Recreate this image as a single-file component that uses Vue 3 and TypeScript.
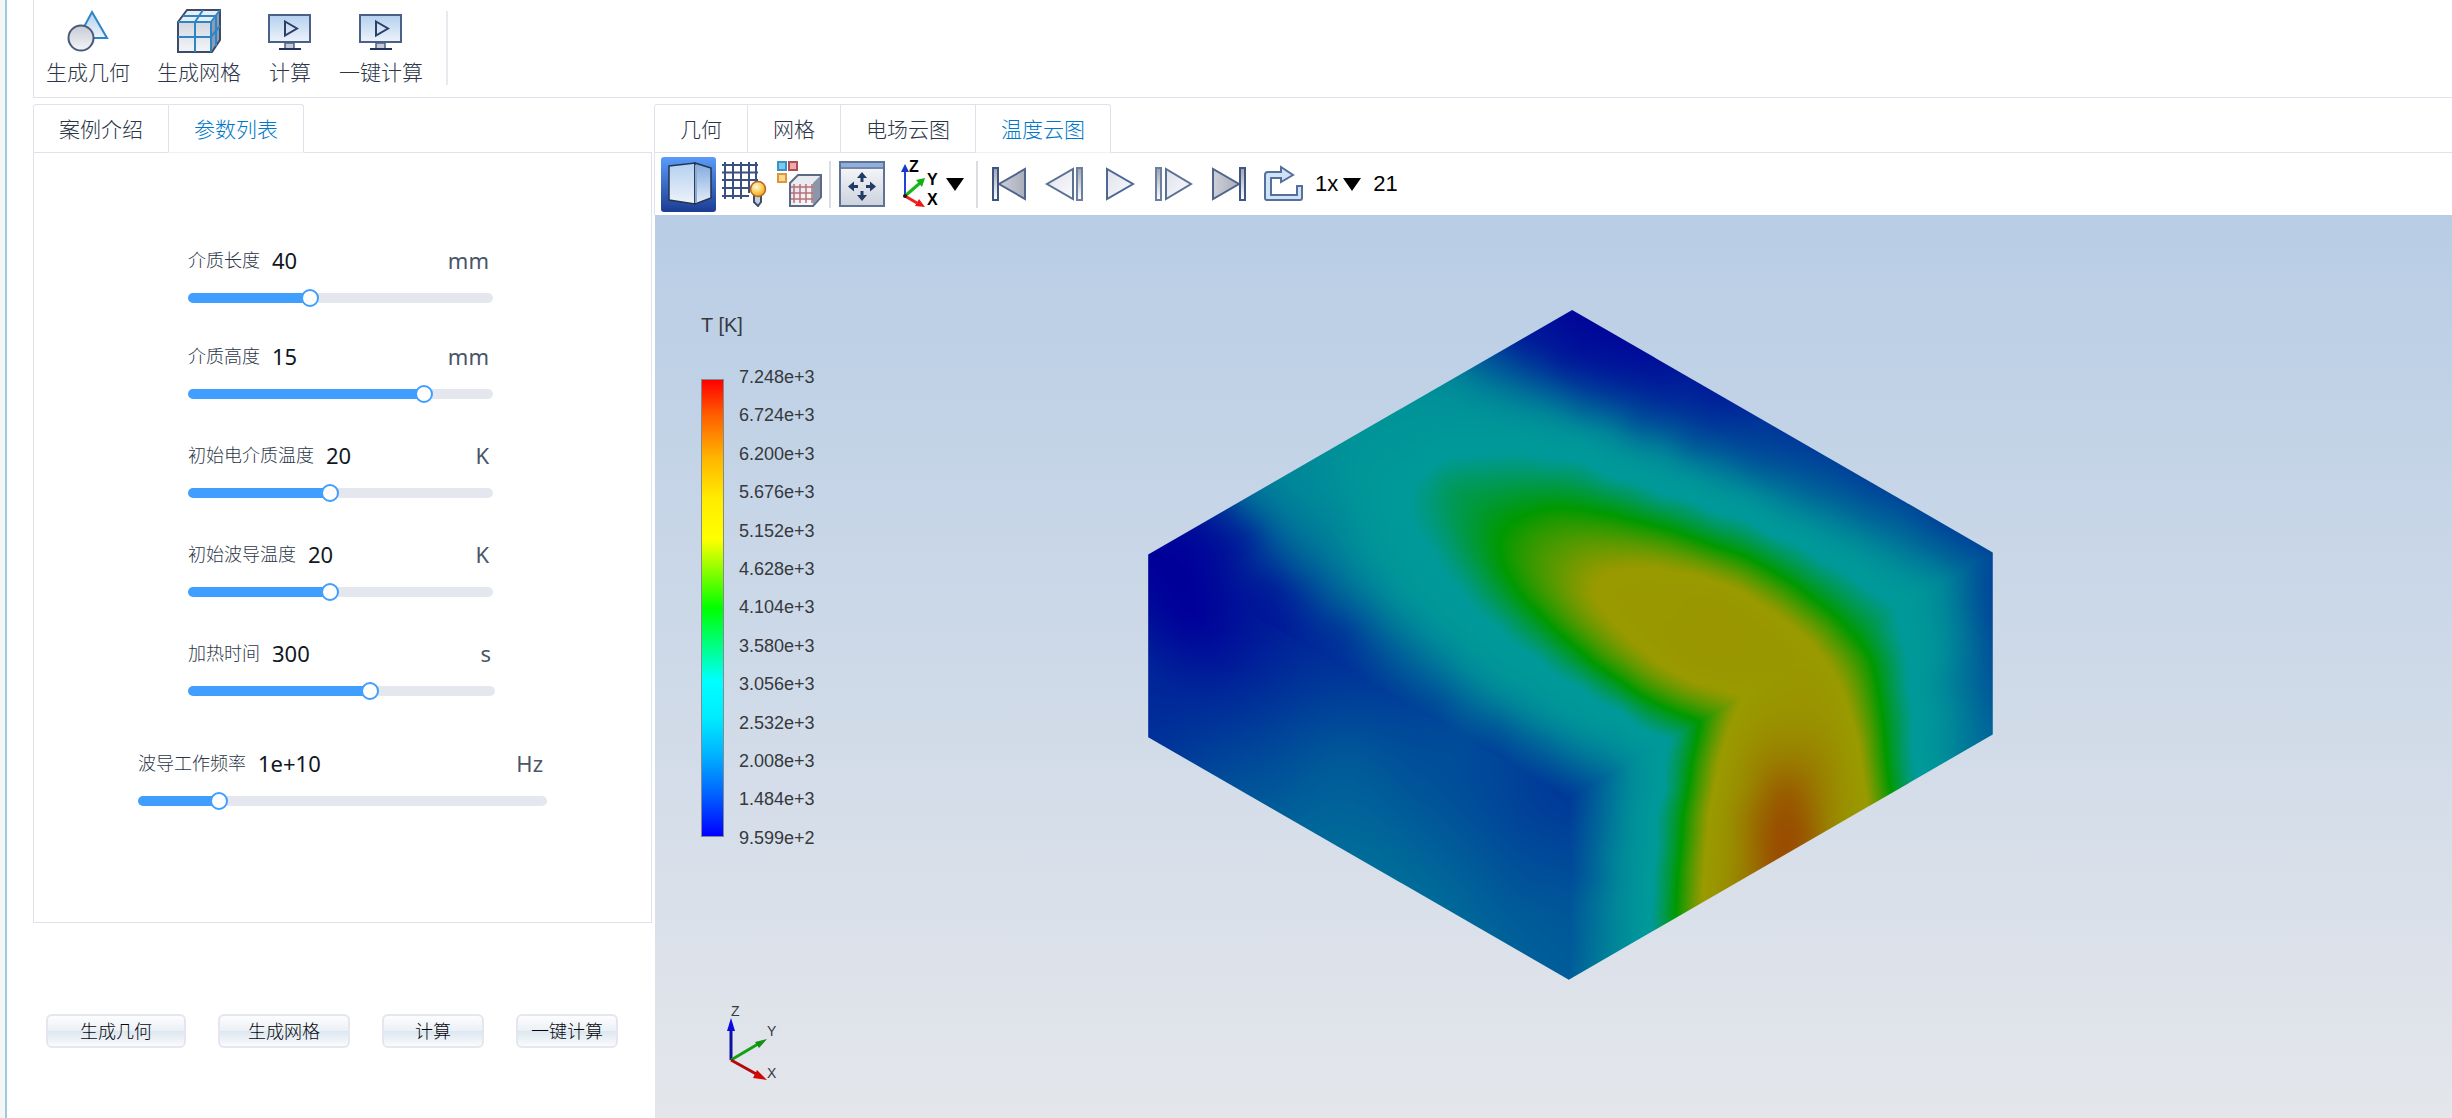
<script setup lang="ts">
import { onMounted, ref } from 'vue'

interface Param {
  id: string
  label: string
  value: number
  text: string
  unit: string
  max: number
}

const params = ref<Param[]>([
  { id: 'length', label: '介质长度', value: 40, text: '40', unit: 'mm', max: 102 },
  { id: 'height', label: '介质高度', value: 15, text: '15', unit: 'mm', max: 19 },
  { id: 'dielectric', label: '初始电介质温度', value: 20, text: '20', unit: 'K', max: 43 },
  { id: 'waveguide', label: '初始波导温度', value: 20, text: '20', unit: 'K', max: 43 },
  { id: 'time', label: '加热时间', value: 300, text: '300', unit: 's', max: 502 },
  { id: 'frequency', label: '波导工作频率', value: 1e10, text: '1e+10', unit: 'Hz', max: 5.4e10 },
])

function onSlide(p: Param, e: Event) {
  p.value = Number((e.target as HTMLInputElement).value)
  p.text = p.value >= 1e9 ? p.value.toExponential(0) : String(Math.round(p.value))
}

const leftTabs = ['案例介绍', '参数列表']
const rightTabs = ['几何', '网格', '电场云图', '温度云图']
const leftTab = ref('参数列表')
const rightTab = ref('温度云图')

const legend = [
  '7.248e+3', '6.724e+3', '6.200e+3', '5.676e+3', '5.152e+3', '4.628e+3', '4.104e+3',
  '3.580e+3', '3.056e+3', '2.532e+3', '2.008e+3', '1.484e+3', '9.599e+2',
]

/* Temperature samples per face: x, y, normalised temperature. */
type Sample = [number, number, number]
type Point = [number, number]

const isoline = (t: number, points: Point[]): Sample[] => points.map(([x, y]) => [x, y, t])

const topLeftEdge: Sample[] = [
  [32, 583, 0], [100, 632, 0], [160, 675, 0.015], [210, 711, 0.03], [330, 796, 0.065],
  [400, 847, 0.08], [507, 924, 0.1], [596, 987, 0.115], [685, 1051, 0.1], [745, 1094, 0.088],
  [781, 1120, 0.085],
]
const topRightEdge: Sample[] = [
  [781, 1120, 0.085], [850, 1070, 0.17], [900, 1035, 0.27], [930, 1013, 0.31], [965, 988, 0.35],
  [1015, 952, 0.5], [1090, 898, 0.65], [1180, 834, 0.68], [1230, 798, 0.65], [1285, 759, 0.5],
  [1365, 701, 0.35], [1400, 676, 0.31], [1440, 648, 0.25], [1480, 619, 0.17], [1537, 578, 0.11],
]
const frontEdge: Sample[] = [
  [781, 1200, 0.1], [781, 1350, 0.13], [781, 1522, 0.145],
]

const topFace: Sample[] = [
  ...topLeftEdge,
  ...topRightEdge.slice(1),
  ...isoline(0.02, [[121, 530], [151, 574], [165, 645]]),
  ...isoline(0.05, [
    [151, 512], [198, 552], [204, 611], [258, 650],
    [689, 118], [766, 162], [863, 195], [950, 221], [1037, 246],
  ]),
  ...isoline(0.08, [[175, 486], [222, 537], [235, 590], [305, 670], [377, 755]]),
  ...isoline(0.1, [[665, 132], [728, 177], [805, 221], [901, 258], [998, 294], [1070, 320]]),
  ...isoline(0.13, [
    [198, 471], [252, 545], [299, 611], [359, 685], [460, 810], [555, 898], [656, 975], [720, 1030],
    [636, 154], [708, 199], [805, 243], [901, 291], [998, 331], [1095, 368], [1191, 400], [1300, 456],
    [1400, 512],
  ]),
  ...isoline(0.17, [
    [216, 464], [287, 545], [341, 604], [418, 699], [495, 795], [567, 869], [656, 940], [745, 1000],
    [805, 1045], [612, 169], [699, 217], [805, 272], [901, 316], [998, 361], [1114, 412], [1211, 456],
    [1310, 508], [1400, 560], [1450, 595],
  ]),
  ...isoline(0.25, [
    [299, 412], [371, 486], [400, 574], [448, 648], [507, 721], [567, 788], [626, 854], [703, 913],
    [774, 964], [852, 1005], [573, 206], [650, 250], [757, 287], [853, 324], [950, 368], [1075, 434],
    [1191, 500], [1307, 567], [1384, 618],
  ]),
  ...isoline(0.31, [
    [418, 412], [436, 486], [460, 574], [501, 655], [555, 721], [614, 788], [685, 854], [763, 913],
    [834, 957], [612, 305], [708, 316], [805, 338], [901, 390], [998, 427], [1095, 471], [1191, 530],
    [1288, 589], [1365, 648],
  ]),
  ...isoline(0.35, [
    [496, 470], [505, 515], [543, 577], [590, 660], [656, 740], [727, 808], [804, 871], [875, 922],
    [501, 441], [534, 390], [592, 368], [650, 362], [747, 375], [853, 412], [950, 453], [1046, 493],
    [1143, 540], [1240, 602], [1317, 660],
  ]),
  ...isoline(0.5, [
    [700, 500], [760, 478], [660, 550], [665, 610], [700, 680], [760, 755], [830, 830], [900, 890],
    [970, 932], [850, 492], [940, 520], [1040, 565], [1150, 625], [1220, 685],
  ]),
  ...isoline(0.65, [
    [825, 655], [870, 620], [940, 612], [1010, 625], [1080, 655], [1150, 710], [1200, 760], [830, 680],
    [860, 730], [900, 780], [950, 830], [1010, 870],
  ]),
  [1040, 750, 0.69], [960, 700, 0.67], [1120, 800, 0.68],
  [480, 390, 0.32], [510, 340, 0.31], [370, 390, 0.275],
  [310, 385, 0.24], [370, 342, 0.275], [440, 292, 0.29], [500, 248, 0.285], [545, 217, 0.26],
  [740, 78, 0.03], [788, 43, 0.01],
  [870, 101, 0.015], [1000, 194, 0.045], [1130, 287, 0.08], [1250, 373, 0.1], [1370, 459, 0.11],
  [780, 600, 0.6], [850, 550, 0.58], [575, 430, 0.41], [600, 560, 0.43],
]
const leftFace: Sample[] = [
  ...topLeftEdge,
  ...frontEdge,
  [80, 640, 0], [110, 720, 0], [32, 720, 0.02], [32, 820, 0.05], [150, 780, 0.02], [200, 830, 0.045],
  [32, 986, 0.07], [120, 900, 0.06], [250, 900, 0.075], [150, 1000, 0.09], [300, 950, 0.1],
  [380, 1040, 0.14], [250, 1100, 0.13], [200, 1106, 0.13], [400, 1249, 0.175], [500, 1321, 0.175],
  [600, 1393, 0.165], [700, 1464, 0.15], [400, 1160, 0.16], [500, 1100, 0.13], [500, 1000, 0.115],
  [600, 1080, 0.115], [600, 1250, 0.14], [700, 1150, 0.1], [700, 1300, 0.125],
]
const rightFace: Sample[] = [
  ...topRightEdge,
  ...frontEdge,
  ...isoline(0.5, [
    [1320, 810], [1335, 900], [1345, 1000], [1355, 1108], [1000, 1040], [985, 1150], [975, 1280], [970, 1385],
  ]),
  ...isoline(0.35, [
    [1372, 770], [1385, 880], [1392, 1000], [1397, 1080], [955, 1100], [942, 1230], [935, 1330], [932, 1413],
  ]),
  ...isoline(0.65, [
    [1065, 970], [1045, 1050], [1030, 1150], [1022, 1250], [1018, 1350], [1275, 900], [1300, 1000],
    [1310, 1090], [1315, 1138],
  ]),
  [1180, 930, 0.71], [1180, 1000, 0.76], [1165, 1110, 0.86], [1160, 1190, 0.88], [1150, 1258, 0.88],
  [1210, 1190, 0.85], [1100, 1100, 0.76], [1240, 1100, 0.77], [1080, 1250, 0.75], [1255, 1180, 0.75],
  [1430, 800, 0.3], [1430, 950, 0.3], [1430, 1055, 0.31], [1460, 850, 0.22], [1475, 1020, 0.22],
  [1500, 700, 0.15], [1537, 780, 0.12], [1537, 981, 0.16],
  [840, 1200, 0.17], [880, 1250, 0.26], [870, 1350, 0.25], [900, 1430, 0.29], [830, 1450, 0.19],
  [830, 1300, 0.165], [900, 1150, 0.28], [850, 1130, 0.18],
]

const kernel = (r2: number) => (r2 > 0 ? 0.5 * r2 * Math.log(r2) : 0)

/* Thin-plate spline through the samples of one face. */
function spline(samples: Sample[]): (x: number, y: number) => number {
  const n = samples.length
  const px = samples.map((s) => s[0] / 1240)
  const py = samples.map((s) => s[1] / 1536)
  const size = n + 3
  const m: number[][] = []
  for (let i = 0; i < size; i++) m.push(new Array(size + 1).fill(0))
  for (let i = 0; i < n; i++) {
    for (let j = 0; j < n; j++) m[i][j] = kernel((px[i] - px[j]) ** 2 + (py[i] - py[j]) ** 2)
    m[i][i] += 0.0008
    const poly = [1, px[i], py[i]]
    for (let k = 0; k < 3; k++) {
      m[i][n + k] = poly[k]
      m[n + k][i] = poly[k]
    }
    m[i][size] = samples[i][2]
  }
  for (let c = 0; c < size; c++) {
    let p = c
    for (let r = c + 1; r < size; r++) if (Math.abs(m[r][c]) > Math.abs(m[p][c])) p = r
    const swap = m[c]
    m[c] = m[p]
    m[p] = swap
    for (let r = c + 1; r < size; r++) {
      const f = m[r][c] / m[c][c]
      if (f !== 0) for (let k = c; k <= size; k++) m[r][k] -= f * m[c][k]
    }
  }
  const w = new Array<number>(size).fill(0)
  for (let r = size - 1; r >= 0; r--) {
    let sum = m[r][size]
    for (let k = r + 1; k < size; k++) sum -= m[r][k] * w[k]
    w[r] = sum / m[r][r]
  }
  return (x, y) => {
    const a = x / 1240
    const b = y / 1536
    let v = w[n] + w[n + 1] * a + w[n + 2] * b
    for (let i = 0; i < n; i++) v += w[i] * kernel((a - px[i]) ** 2 + (b - py[i]) ** 2)
    return v
  }
}

/* Blue, cyan, green, yellow, red scale under the scene's shading. */
function shade(t: number): [number, number, number] {
  const lit = 153
  const v = Math.min(1, Math.max(0, t))
  if (v < 0.35) return [0, lit * Math.sin((v / 0.35) * (Math.PI / 2)), lit]
  if (v < 0.5) return [0, lit, lit * ((0.5 - v) / 0.15)]
  if (v < 0.65) return [lit * ((v - 0.5) / 0.15), lit, 0]
  return [lit, lit * Math.sin(((1 - v) / 0.35) * (Math.PI / 2)), 0]
}

const field = ref<HTMLCanvasElement | null>(null)

onMounted(() => {
  const canvas = field.value
  const ctx = canvas?.getContext('2d')
  if (!canvas || !ctx) return
  const top = spline(topFace)
  const left = spline(leftFace)
  const right = spline(rightFace)
  const image = ctx.createImageData(canvas.width, canvas.height)
  for (let j = 0; j < canvas.height; j++) {
    const y = 43 + ((j + 0.5) / canvas.height) * 1479
    for (let i = 0; i < canvas.width; i++) {
      const x = 32 + ((i + 0.5) / canvas.width) * 1505
      const ridge = x < 781 ? 583 + 0.717 * (x - 32) : 1120 - 0.717 * (x - 781)
      const face = y < ridge ? top : x < 781 ? left : right
      const [r, g, b] = shade(face(x, y))
      const k = (j * canvas.width + i) * 4
      image.data[k] = r
      image.data[k + 1] = g
      image.data[k + 2] = b
      image.data[k + 3] = 255
    }
  }
  ctx.putImageData(image, 0, 0)
})
</script>

<template>
  <div class="app">
    <svg class="defs" width="0" height="0" aria-hidden="true">
      <defs>
        <linearGradient id="g-metal" x1="0" y1="0" x2="0" y2="1">
          <stop offset="0" stop-color="#c6cad4" /><stop offset="1" stop-color="#f4f5f8" />
        </linearGradient>
        <linearGradient id="g-sky" x1="0" y1="0" x2="0" y2="1">
          <stop offset="0" stop-color="#b4d0ef" /><stop offset="1" stop-color="#eef3fa" />
        </linearGradient>
        <linearGradient id="g-side" x1="0" y1="0" x2="0" y2="1">
          <stop offset="0" stop-color="#7fa9dd" /><stop offset="1" stop-color="#e6eefa" />
        </linearGradient>
        <linearGradient id="g-dark" x1="0" y1="0" x2="1" y2="0">
          <stop offset="0" stop-color="#cdd0d8" /><stop offset="1" stop-color="#a9aeba" />
        </linearGradient>
        <linearGradient id="g-pale" x1="0" y1="0" x2="1" y2="1">
          <stop offset="0" stop-color="#dfe2ea" /><stop offset="1" stop-color="#fafbfd" />
        </linearGradient>
        <linearGradient id="g-window" x1="0" y1="0" x2="0" y2="1">
          <stop offset="0" stop-color="#fafbfd" /><stop offset="1" stop-color="#ccd1dc" />
        </linearGradient>
        <linearGradient id="g-bar" x1="0" y1="0" x2="0" y2="1">
          <stop offset="0" stop-color="#9aa3b5" /><stop offset="1" stop-color="#ffffff" />
        </linearGradient>
        <radialGradient id="g-bulb" cx="0.4" cy="0.35" r="0.7">
          <stop offset="0" stop-color="#fffbe0" /><stop offset="0.6" stop-color="#fdc84e" /><stop offset="1" stop-color="#f09a1c" />
        </radialGradient>
        <g id="monitor">
          <rect x="1" y="6" width="41" height="27" fill="url(#g-sky)" stroke="#4a6088" stroke-width="2" />
          <path d="M17 12.500 29 19.500 17 26.500Z" fill="none" stroke="#2c3f69" stroke-width="2" />
          <path d="M17 34h9v6h-9z" fill="#c6cad4" stroke="#4a6088" stroke-width="1.500" />
          <path d="M11 40h22" stroke="#22335c" stroke-width="2" />
        </g>
      </defs>
    </svg>

    <div class="edge"></div>
    <main class="main">
      <header class="ribbon">
        <button class="ribbon-btn" type="button">
          <svg width="44" height="44" viewBox="0 0 44 44">
            <path d="M26 3 41 29H12Z" fill="url(#g-sky)" stroke="#2b86c5" stroke-width="2" />
            <circle cx="15" cy="29" r="12.500" fill="url(#g-metal)" stroke="#4a5978" stroke-width="2" />
          </svg>
          <span>生成几何</span>
        </button>
        <button class="ribbon-btn" type="button">
          <svg width="44" height="44" viewBox="0 0 44 44">
            <path d="M1 13 10 1H43V31L35 43H1Z" fill="url(#g-metal)" />
            <path d="M35 13 43 1V31L35 43Z" fill="#8f9ab3" />
            <path d="M1 13 10 1H43L35 13Z" fill="#e8edf4" />
            <path d="M1 13 10 1H43V31L35 43H1Z" fill="none" stroke="#3c4a6b" stroke-width="2" />
            <path d="M6 7H39V37M18 43V13L26 1M1 28H34L43 17" fill="none" stroke="#2b86c5" stroke-width="2" />
            <path d="M1 13H34V43M34 13 43 1" fill="none" stroke="#2b86c5" stroke-width="2" />
          </svg>
          <span>生成网格</span>
        </button>
        <button class="ribbon-btn" type="button">
          <svg width="44" height="44" viewBox="0 0 44 44"><use href="#monitor" /></svg>
          <span>计算</span>
        </button>
        <button class="ribbon-btn" type="button">
          <svg width="44" height="44" viewBox="0 0 44 44"><use href="#monitor" /></svg>
          <span>一键计算</span>
        </button>
        <i class="ribbon-sep"></i>
      </header>

      <div class="columns">
        <section class="left">
          <nav class="tabs">
            <button
              v-for="t in leftTabs"
              :key="t"
              type="button"
              class="tab"
              :class="{ active: t === leftTab }"
              @click="leftTab = t"
            >{{ t }}</button>
            <i class="tabs-rest"></i>
          </nav>
          <form class="panel" @submit.prevent>
            <div v-for="p in params" :key="p.id" class="param" :class="p.id">
              <div class="param-head">
                <label :for="p.id">{{ p.label }}</label>
                <output :for="p.id">{{ p.text }}</output>
                <span class="unit">{{ p.unit }}</span>
              </div>
              <input
                :id="p.id"
                class="slider"
                type="range"
                min="0"
                :max="p.max"
                step="any"
                :value="p.value"
                :style="{ '--fill': (p.value / p.max) * 100 + '%' }"
                @input="onSlide(p, $event)"
              />
            </div>
          </form>
          <div class="actions">
            <button class="action wide" type="button">生成几何</button>
            <button class="action mid" type="button">生成网格</button>
            <button class="action" type="button">计算</button>
            <button class="action" type="button">一键计算</button>
          </div>
        </section>

        <section class="right">
          <nav class="tabs">
            <button
              v-for="t in rightTabs"
              :key="t"
              type="button"
              class="tab"
              :class="{ active: t === rightTab }"
              @click="rightTab = t"
            >{{ t }}</button>
            <i class="tabs-rest"></i>
          </nav>

          <div class="toolbar">
            <button class="tool on" type="button" aria-label="实体">
              <svg width="46" height="46" viewBox="0 0 46 46">
                <path d="M3 5 29 2V43L3 39Z" fill="url(#g-sky)" stroke="#26334f" stroke-width="1.500" />
                <path d="M29 2 45 7V37L29 43Z" fill="url(#g-side)" stroke="#26334f" stroke-width="1.500" />
                <path d="M30 4V42" stroke="#8daad2" stroke-width="2" />
              </svg>
            </button>
            <button class="tool" type="button" aria-label="网格显示">
              <svg width="46" height="46" viewBox="0 0 46 46">
                <path d="M1 4H37M1 11.500H37M1 19H37M1 27H30M1 35H28M4 1V38M12 1V38M20 1V38M28 1V32M35 1V22" fill="none" stroke="#3a5080" stroke-width="2" />
                <path d="M33 34h7v7l-3 4-4-4z" fill="#c7d0de" stroke="#3d4f70" stroke-width="2" />
                <circle cx="37" cy="28" r="7.500" fill="url(#g-bulb)" stroke="#b4661a" stroke-width="1.500" />
              </svg>
            </button>
            <button class="tool" type="button" aria-label="颜色">
              <svg width="46" height="46" viewBox="0 0 46 46">
                <rect x="2" y="1" width="8" height="8" fill="#7cc8ee" stroke="#3a95c4" stroke-width="2" />
                <rect x="13" y="1" width="8" height="8" fill="#ecaaaa" stroke="#ad4f55" stroke-width="2" />
                <rect x="2" y="13" width="8" height="8" fill="#ffd98a" stroke="#d99844" stroke-width="2" />
                <path d="M14 22 22 14H45V36L37 45H14Z" fill="#e9ebf0" stroke="#5a6984" stroke-width="2" />
                <path d="M37 22 44 15V36L37 44Z" fill="#8c96aa" />
                <path d="M15 24H36V44H15Z" fill="url(#g-pale)" />
                <path d="M15 26H37M15 32H37M15 38H37M18 23V42M24 23V42M30 23V42M36 23V42" stroke="#b87077" stroke-width="1.500" />
              </svg>
            </button>
            <i class="tool-sep"></i>
            <button class="tool" type="button" aria-label="适应窗口">
              <svg width="46" height="46" viewBox="0 0 46 46">
                <rect x="1" y="1" width="44" height="44" fill="url(#g-window)" stroke="#5f7396" stroke-width="2" />
                <path d="M2 2H44V6H2Z" fill="#8fb0dc" />
                <path d="M2 7H44" stroke="#4c6288" stroke-width="1.500" />
                <path d="M23 11 28 17H24.500V21H21.500V17H18ZM23 40 28 34H24.500V30H21.500V34H18ZM9 25.500 15 20.500V24H19V27H15V30.500ZM37 25.500 31 20.500V24H27V27H31V30.500Z" fill="#223a66" />
              </svg>
            </button>
            <button class="axes-btn" type="button" aria-label="视角">
              <svg width="46" height="48" viewBox="0 0 46 48">
                <path d="M9 36V11" stroke="#2344d0" stroke-width="2" />
                <path d="M9 4 13 12H5Z" fill="#1239cc" />
                <path d="M9 36 24 23" stroke="#18b418" stroke-width="3" />
                <path d="M29 18 26 27 20 20Z" fill="#10b010" />
                <path d="M9 36 21 43" stroke="#f02020" stroke-width="3" />
                <path d="M29 47 19 46 23 39Z" fill="#ee1616" />
                <circle cx="9" cy="36" r="2" fill="#301010" />
                <text x="13" y="12" class="axes-text">Z</text>
                <text x="31" y="25" class="axes-text">Y</text>
                <text x="31" y="45" class="axes-text">X</text>
              </svg>
              <svg width="18" height="13" viewBox="0 0 18 13"><path d="M0 0H18L9 13Z" fill="#000" /></svg>
            </button>
            <i class="tool-sep late"></i>
            <button class="tool" type="button" aria-label="第一帧">
              <svg width="36" height="36" viewBox="0 0 36 36">
                <path d="M34 3V33L8 18Z" fill="url(#g-dark)" stroke="#4f658d" stroke-width="2" />
                <path d="M2 2h5v32H2z" fill="url(#g-bar)" stroke="#3f5480" stroke-width="2" />
              </svg>
            </button>
            <button class="tool" type="button" aria-label="上一帧">
              <svg width="40" height="36" viewBox="0 0 40 36">
                <path d="M29 3V33L3 18Z" fill="url(#g-pale)" stroke="#5b7095" stroke-width="2" />
                <path d="M33 2h5v32h-5z" fill="url(#g-bar)" stroke="#6c7f9f" stroke-width="2" />
              </svg>
            </button>
            <button class="tool" type="button" aria-label="播放">
              <svg width="32" height="36" viewBox="0 0 32 36">
                <path d="M4 3V33L30 18Z" fill="url(#g-pale)" stroke="#4d6896" stroke-width="2" />
              </svg>
            </button>
            <button class="tool" type="button" aria-label="下一帧">
              <svg width="40" height="36" viewBox="0 0 40 36">
                <path d="M12 3V33L37 18Z" fill="url(#g-pale)" stroke="#5b7095" stroke-width="2" />
                <path d="M2 2h5v32H2z" fill="url(#g-bar)" stroke="#6c7f9f" stroke-width="2" />
              </svg>
            </button>
            <button class="tool" type="button" aria-label="最后一帧">
              <svg width="36" height="36" viewBox="0 0 36 36">
                <path d="M2 3V33L28 18Z" fill="url(#g-dark)" stroke="#4f658d" stroke-width="2" />
                <path d="M29 2h5v32h-5z" fill="url(#g-bar)" stroke="#3f5480" stroke-width="2" />
              </svg>
            </button>
            <button class="tool" type="button" aria-label="循环">
              <svg width="40" height="38" viewBox="0 0 40 38">
                <path d="M17 2 29 10 17 17V13H7V30H33V21H38V33Q38 35 36 35H3Q1 35 1 33V10Q1 7 4 7H17Z" fill="#d0e2f5" stroke="#56709c" stroke-width="2" />
              </svg>
            </button>
            <button class="speed" type="button">
              <span>1x</span>
              <svg width="18" height="13" viewBox="0 0 18 13"><path d="M0 0H18L9 13Z" fill="#000" /></svg>
            </button>
            <span class="frame">21</span>
          </div>

          <div class="viewport">
            <div class="legend">
              <div class="legend-title">T [K]</div>
              <div class="legend-body">
                <div class="legend-bar"></div>
                <ul class="legend-ticks">
                  <li v-for="v in legend" :key="v">{{ v }}</li>
                </ul>
              </div>
            </div>
            <canvas ref="field" class="model" width="845" height="670"></canvas>
            <svg class="triad" width="60" height="80" viewBox="0 0 60 80">
              <path d="M11 52V20" stroke="#1010a0" stroke-width="3" />
              <path d="M11 10 15 23H7Z" fill="#0a0ae0" />
              <path d="M11 52 38 36" stroke="#12a012" stroke-width="3" />
              <path d="M47 31 39 40 35 34Z" fill="#159015" />
              <path d="M11 52 38 67" stroke="#b40a0a" stroke-width="3" />
              <path d="M47 72 33 70 37 62Z" fill="#d00808" />
              <text x="11" y="8" class="triad-text">Z</text>
              <text x="47" y="28" class="triad-text">Y</text>
              <text x="47" y="70" class="triad-text">X</text>
            </svg>
          </div>
        </section>
      </div>
    </main>
  </div>
</template>

<style>
body {
  margin: 0;
  background: #fff;
}
</style>

<style scoped>
.app {
  display: flex;
  min-height: 100vh;
  box-sizing: border-box;
  background: #fff;
  color: #2c3647;
  font-family: 'Noto Sans', 'Noto Sans CJK SC', sans-serif;
  font-weight: 300;
}
.defs {
  position: absolute;
}
button {
  margin: 0;
  padding: 0;
  border: 0;
  background: none;
  color: inherit;
  font: inherit;
  cursor: pointer;
}
svg {
  display: block;
  flex: none;
}
.edge {
  flex: none;
  width: 5px;
  background: #f5f5f6;
  border-right: 2px solid #9acde0;
}
.main {
  flex: 1;
  min-width: 0;
  display: flex;
  flex-direction: column;
  padding-left: 26px;
}
.ribbon {
  display: flex;
  gap: 27px;
  height: 97px;
  padding-left: 12px;
  border-left: 1px solid #dfe2ea;
  border-bottom: 1px solid #dfe2ea;
}
.ribbon-btn {
  display: flex;
  flex-direction: column;
  align-items: center;
  gap: 6px;
  padding-top: 9px;
  font-size: 21px;
  line-height: 26px;
  align-self: flex-start;
  white-space: nowrap;
}
.ribbon-sep {
  width: 2px;
  height: 74px;
  margin: 11px 0 0 -4px;
  background: #e8eaf0;
}
.columns {
  flex: 1;
  display: grid;
  grid-template-columns: minmax(0, 619fr) minmax(0, 1798fr);
  column-gap: 2px;
  padding-top: 6px;
}
.left,
.right {
  display: flex;
  flex-direction: column;
}
.tabs {
  display: flex;
  height: 49px;
}
.tab {
  flex: none;
  box-sizing: border-box;
  padding: 0 25px;
  border: solid #dfe2ea;
  border-width: 1px 1px 1px 0;
  font-size: 21px;
  line-height: 46px;
  white-space: nowrap;
}
.tab:first-child {
  border-left-width: 1px;
  border-top-left-radius: 3px;
}
.tab:nth-last-child(2) {
  border-top-right-radius: 3px;
}
.tab.active {
  color: #0078c8;
  border-bottom-color: #eff1f5;
}
.tabs-rest {
  flex: 1;
  border-bottom: 1px solid #dfe2ea;
}
.panel {
  padding: 93px 0 112px 154px;
  border: solid #dfe2ea;
  border-width: 0 1px 1px;
}
.param {
  width: 305px;
  margin-bottom: 39px;
}
.param.length {
  margin-bottom: 36px;
}
.param.time {
  width: 307px;
  margin-bottom: 50px;
}
.param.frequency {
  width: 409px;
  margin: 0 0 0 -50px;
}
.param-head {
  display: flex;
  align-items: center;
  height: 28px;
  padding-right: 4px;
  margin-bottom: 15px;
  line-height: 28px;
}
.param-head label {
  font-size: 18px;
}
.param-head output {
  margin-left: 12px;
  color: #111722;
  font-size: 22px;
  font-weight: 400;
}
.unit {
  margin-left: auto;
  color: #4a5568;
  font-size: 22px;
  font-weight: 400;
}
.slider {
  appearance: none;
  display: block;
  width: 100%;
  height: 18px;
  margin: 0;
  background: none;
}
.slider::-webkit-slider-runnable-track {
  height: 10px;
  border-radius: 5px;
  background: linear-gradient(to right, #409eff var(--fill), #e4e7ed var(--fill));
}
.slider::-webkit-slider-thumb {
  appearance: none;
  box-sizing: border-box;
  width: 18px;
  height: 18px;
  margin-top: -4px;
  border: 2px solid #409eff;
  border-radius: 50%;
  background: #fff;
}
.param + .param {
  margin-top: -1px;
}
.actions {
  display: flex;
  gap: 32px;
  padding: 91px 0 70px 13px;
}
.action {
  box-sizing: border-box;
  width: 102px;
  height: 34px;
  border: 2px solid #e6e7ee;
  border-radius: 6px;
  background: linear-gradient(#fdfdfe, #ebf0f5 50%, #dde7f0 51%, #fafbfd);
  color: #05080e;
  font-size: 18px;
  line-height: 28px;
}
.action.wide {
  width: 140px;
}
.action.mid {
  width: 132px;
}
.toolbar {
  display: flex;
  align-items: center;
  height: 62px;
  box-sizing: border-box;
  padding: 0 7px 0 6px;
  border-left: 1px solid #dfe2ea;
}
.tool {
  display: flex;
  flex: none;
  align-items: center;
  justify-content: center;
  width: 55px;
  height: 55px;
}
.tool.on {
  border-radius: 3px;
  background: linear-gradient(#5a9cf9, #1b3c92);
}
.tool-sep {
  width: 2px;
  height: 47px;
  margin: 0 3px;
  background: #dcdde2;
}
.tool-sep.late {
  margin-left: 12px;
}
.axes-btn {
  display: flex;
  align-items: center;
  gap: 4px;
  padding-left: 7px;
}
.axes-text {
  fill: #000;
  font: 700 16px 'Liberation Sans', sans-serif;
}
.speed {
  display: flex;
  align-items: center;
  gap: 5px;
  padding-left: 4px;
  color: #000;
  font: 22px/30px 'Liberation Sans', sans-serif;
}
.frame {
  margin-left: 12px;
  color: #000;
  font: 22px/30px 'Liberation Sans', sans-serif;
}
.viewport {
  flex: 1;
  position: relative;
  margin-left: 1px;
  background: linear-gradient(#b8cde5, #e4e6eb);
  overflow: hidden;
}
.legend {
  position: absolute;
  left: 46px;
  top: 99px;
  color: #36393d;
  font-family: 'Liberation Sans', sans-serif;
  font-weight: 400;
}
.legend-title {
  font-size: 20px;
  line-height: 22px;
}
.legend-body {
  display: flex;
  gap: 15px;
  margin-top: 30px;
}
.legend-bar {
  box-sizing: border-box;
  width: 23px;
  margin: 13px 0 12px;
  border: 1px solid #858a90;
  background: linear-gradient(
    to top,
    #00f, #0061ff 9%, #00b4ff 18%, #00ecff 26%, #0ff 34%, #0f0 50%,
    #ff0 65%, #ffec00 74%, #ffb400 83%, #ff6100 92%, #f00
  );
}
.legend-ticks {
  display: flex;
  flex-direction: column;
  justify-content: space-between;
  height: 483px;
  margin: 0;
  padding: 0;
  list-style: none;
  font-size: 18px;
  line-height: 22px;
}
.model {
  position: absolute;
  left: calc(27% + 8px);
  top: 95px;
  width: 47%;
  aspect-ratio: 845 / 670;
  clip-path: polygon(50.2% 0, 100% 36.2%, 100% 63.4%, 49.8% 100%, 0 63.8%, 0 36.5%);
}
.triad {
  position: absolute;
  left: 65px;
  bottom: 30px;
  overflow: visible;
}
.triad-text {
  fill: #36393d;
  font: 14px 'Liberation Sans', sans-serif;
}
</style>
